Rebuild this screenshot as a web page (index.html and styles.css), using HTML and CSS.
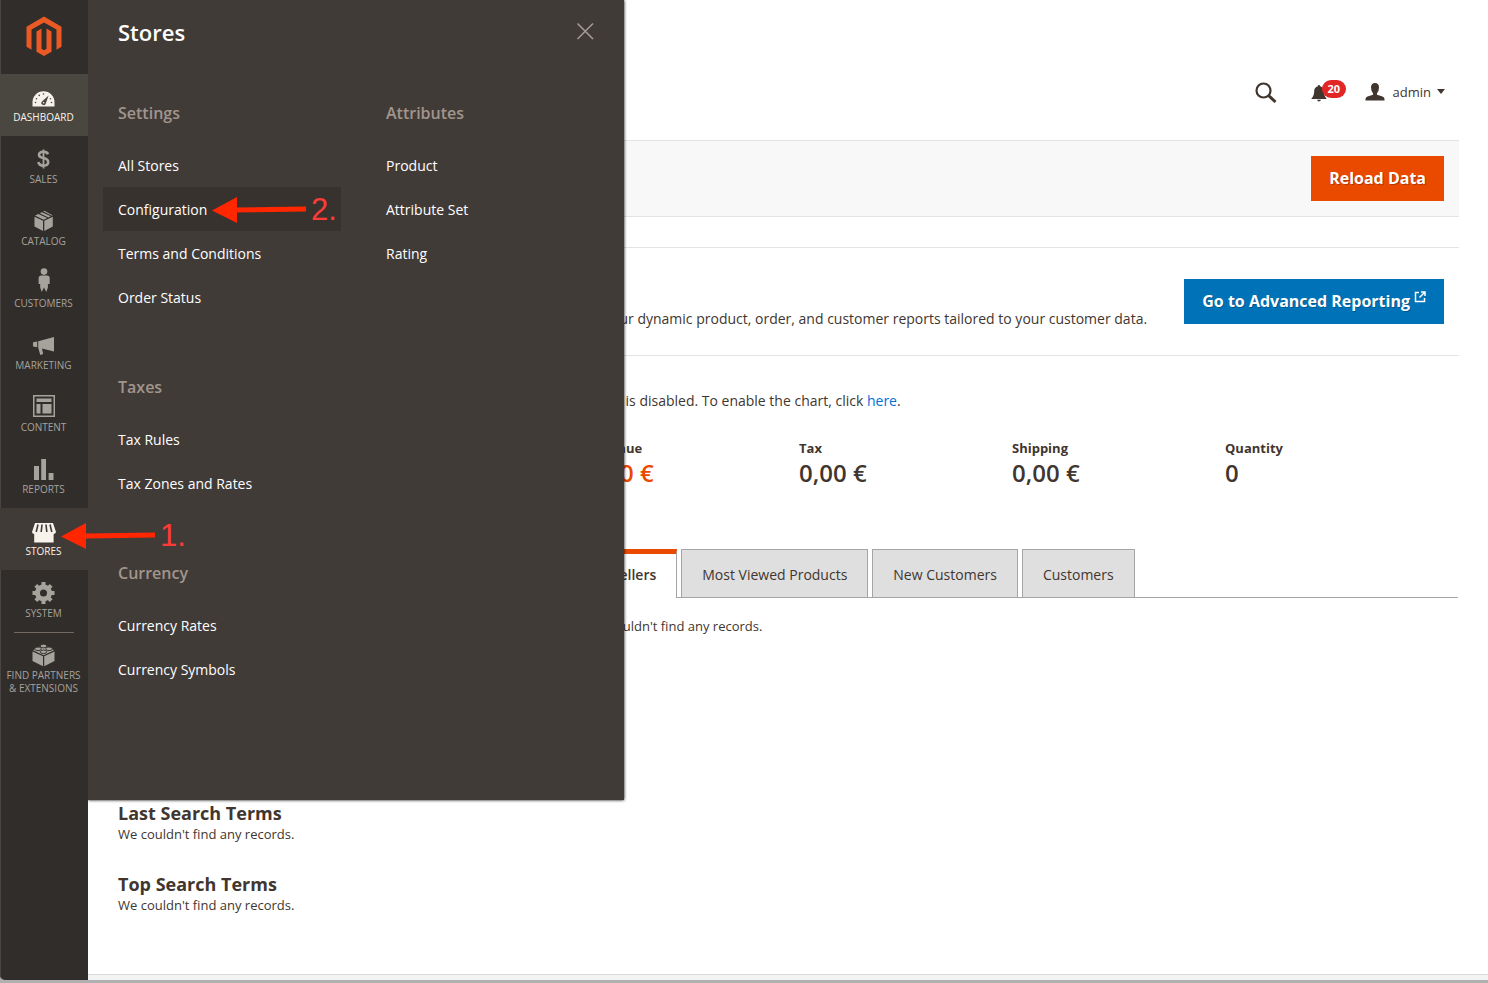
FILE: index.html
```html
<!DOCTYPE html>
<html lang="en">
<head>
    <meta charset="UTF-8">
    <meta name="viewport" content="width=device-width, initial-scale=1.0">
    <title>Dashboard / Magento Admin</title>
    <link rel="stylesheet" href="styles.css">
</head>
<body>
    <div class="window">
        <aside class="sidebar">
            <a class="logo" href="#" aria-label="Magento">
                <svg width="36" height="40" viewBox="0 0 36 40" fill="#eb5a24">
                    <path d="M18 0.5L35.5 10.7V30.8L30.5 33.7V13.6L18 6.4L5.5 13.6V33.7L0.5 30.8V10.7z"/>
                    <path d="M10.5 15.5L15.5 12.6V32.7L18 34.2L20.5 32.7V12.6L25.5 15.5V35.7L18 40L10.5 35.7z"/>
                </svg>
            </a>
            <nav class="menu">
                <a class="menu-item active" href="#">
                    <svg class="icon" viewBox="0 0 28 28">
                        <path d="M2.5 24.5V20a11 10.7 0 0 1 22 0v4.500z"/>
                        <g fill="#4a4640">
                            <circle cx="5.500" cy="20.500" r="0.800"/><circle cx="6.500" cy="16.800" r="0.800"/><circle cx="9.300" cy="13.400" r="0.800"/>
                            <circle cx="13.500" cy="12" r="0.800"/><circle cx="20.500" cy="16.800" r="0.800"/><circle cx="21.500" cy="20.500" r="0.800"/>
                            <path d="M18.600 13.500L15.800 21.500a2.200 2.200 0 1 1-3.800-2z"/>
                        </g>
                        <circle cx="13.700" cy="20.800" r="0.800"/>
                    </svg>
                    <span>Dashboard</span>
                </a>
                <a class="menu-item" href="#">
                    <svg class="icon" viewBox="0 0 28 28" fill="none" stroke="currentColor">
                        <path stroke-width="2.600" d="M18 10.200C17.400 8.600 15.900 7.800 13.500 7.800C10.600 7.800 9 9 9 11C9 15.400 18.200 12.700 18.200 18C18.200 20 16.400 21.600 13.500 21.600C10.500 21.600 8.700 20.200 8.400 18"/>
                        <path stroke-width="1.800" d="M13.500 5.500V24.500"/>
                    </svg>
                    <span>Sales</span>
                </a>
                <a class="menu-item" href="#">
                    <svg class="icon" viewBox="0 0 28 28">
                        <path d="M4.500 10.800L13 14.800V25L4.500 20.500zM14.300 14.800L22.800 10.800V20.500L14.300 25zM5 9.600L8.400 7.900L17.200 12L13.700 13.700zM9.700 7.300L12 6.200L20.700 10.300L18.500 11.400zM13.300 5.500L14.400 4.800L22.600 9.200L21.900 9.700z"/>
                    </svg>
                    <span>Catalog</span>
                </a>
                <a class="menu-item" href="#">
                    <svg class="icon" viewBox="0 0 28 28">
                        <circle cx="14" cy="3.600" r="3.300"/>
                        <path d="M11 7.500H17Q19.700 7.500 19.700 10V16H17.900V19.500L16.300 24L14 19.500L11.700 24L10.200 19.500V16H8.600V10Q8.600 7.500 11 7.500z"/>
                    </svg>
                    <span>Customers</span>
                </a>
                <a class="menu-item" href="#">
                    <svg class="icon" viewBox="0 0 28 28">
                        <path d="M8.200 11.200L24 7V21.500L12 18.600L13.200 24L10.300 25L8.200 17.800zM3 12.200L7.200 11.600V17.200L3 16.600z"/>
                    </svg>
                    <span>Marketing</span>
                </a>
                <a class="menu-item" href="#">
                    <svg class="icon" viewBox="0 0 28 28">
                        <path fill-rule="evenodd" d="M3 3H25V25H3zM4.500 4.500V23.500H23.500V4.500z"/>
                        <path d="M6.500 6.500H21.500V10H6.500zM6.500 12H10.500V21.500H6.500zM12.500 12H21.500V21.500H12.500z"/>
                    </svg>
                    <span>Content</span>
                </a>
                <a class="menu-item" href="#">
                    <svg class="icon" viewBox="0 0 28 28">
                        <path d="M4 12H9V26H4zM11.200 5H16V26H11.200zM18.600 19H23.500V26H18.600z"/>
                    </svg>
                    <span>Reports</span>
                </a>
                <a class="menu-item current" href="#">
                    <svg class="icon" viewBox="0 0 28 28">
                        <path d="M5 7H23L26 16Q25.500 18 23.600 18V26.500H4.200V18Q2.300 18 2 16z"/>
                        <path fill="none" stroke="#413b38" stroke-width="1.600" d="M8 8.500L6.200 16M12 8.500L11.200 16M16 8.500L16.800 16M20 8.500L21.800 16"/>
                    </svg>
                    <span>Stores</span>
                </a>
                <a class="menu-item" href="#">
                    <svg class="icon" viewBox="0 0 28 28">
                        <circle cx="13.500" cy="15" r="6" fill="none" stroke="currentColor" stroke-width="5"/>
                        <path fill="none" stroke="currentColor" stroke-width="4" d="M13.500 4V8M13.500 22V26M2.500 15H6.500M20.500 15H24.500M5.800 7.300L8.600 10.100M18.400 19.900L21.200 22.700M5.800 22.700L8.600 19.900M18.400 10.100L21.200 7.300"/>
                    </svg>
                    <span>System</span>
                </a>
                <a class="menu-item partners" href="#">
                    <svg class="icon" viewBox="0 0 28 28">
                        <path d="M2.500 11.500L13 16.300V26.300L2.500 21zM14.200 16.300L24.500 11.500V21L14.200 26.300zM13.500 4.500L24 10.300L13.600 15.300L3 10.300z"/>
                        <g fill="currentColor" stroke="#312d2a" stroke-width="0.900">
                            <ellipse cx="13.500" cy="6" rx="3.300" ry="1.800"/>
                            <ellipse cx="8" cy="8.800" rx="3.300" ry="1.800"/>
                            <ellipse cx="19" cy="8.800" rx="3.300" ry="1.800"/>
                            <ellipse cx="13.500" cy="11.800" rx="3.300" ry="1.800"/>
                        </g>
                    </svg>
                    <span>Find Partners<br>&amp; Extensions</span>
                </a>
            </nav>
        </aside>

        <section class="submenu">
            <header class="submenu-header">
                <h2>Stores</h2>
                <button class="close" type="button" aria-label="Close">
                    <svg width="18" height="18" viewBox="0 0 18 18" fill="none" stroke="#a79d95" stroke-width="1.500"><path d="M1.500 1.500L17 17M17 1.500L1.500 17"/></svg>
                </button>
            </header>
            <div class="submenu-columns">
                <div class="submenu-column">
                    <div class="submenu-group">
                        <h3>Settings</h3>
                        <a href="#">All Stores</a>
                        <a class="hover" href="#">Configuration</a>
                        <a href="#">Terms and Conditions</a>
                        <a href="#">Order Status</a>
                    </div>
                    <div class="submenu-group">
                        <h3>Taxes</h3>
                        <a href="#">Tax Rules</a>
                        <a href="#">Tax Zones and Rates</a>
                    </div>
                    <div class="submenu-group">
                        <h3>Currency</h3>
                        <a href="#">Currency Rates</a>
                        <a href="#">Currency Symbols</a>
                    </div>
                </div>
                <div class="submenu-column">
                    <div class="submenu-group">
                        <h3>Attributes</h3>
                        <a href="#">Product</a>
                        <a href="#">Attribute Set</a>
                        <a href="#">Rating</a>
                    </div>
                </div>
            </div>
        </section>

        <div class="page">
            <div class="page-content">
                <header class="page-header">
                    <button class="search" type="button" aria-label="Search">
                        <svg width="22" height="22" viewBox="0 0 22 22" fill="none" stroke="#41362f"><circle cx="8.500" cy="8.500" r="7" stroke-width="2.200"/><path stroke-width="3" d="M13.500 13.500L20.500 20"/></svg>
                    </button>
                    <button class="notifications" type="button" aria-label="Notifications">
                        <svg width="16" height="18" viewBox="0 0 16 18" fill="#41362f"><path d="M8 1Q9 1 9.200 2.200Q12.700 3.300 12.800 7Q12.800 12 15.500 14.500V15H0.500V14.500Q3.200 12 3.200 7Q3.300 3.300 6.800 2.200Q7 1 8 1zM6 15.800H10Q9.500 17.500 8 17.500Q6.500 17.500 6 15.800z"/></svg>
                        <span class="badge">20</span>
                    </button>
                    <button class="account" type="button">
                        <svg width="20" height="18" viewBox="0 0 20 18" fill="#41362f"><path d="M10 0Q14 0 14 4.500Q14 8 12 10.300V11.700L17.500 13.500Q19.500 14.200 19.500 16V17.500H0.500V16Q0.500 14.200 2.500 13.500L8 11.700V10.300Q6 8 6 4.500Q6 0 10 0z"/></svg>
                        <span>admin</span>
                        <svg width="8" height="5" viewBox="0 0 8 5" fill="#41362f"><path d="M0 0H8L4 5z"/></svg>
                    </button>
                </header>

                <div class="page-actions">
                    <button class="button primary" type="button">Reload Data</button>
                </div>

                <section class="reporting">
                    <p>Gain new insights and take command of your business' performance, using our dynamic product, order, and customer reports tailored to your customer data.</p>
                    <a class="button secondary" href="#">Go to Advanced Reporting
                        <svg width="12" height="12" viewBox="0 0 12 12" fill="none" stroke="#fff" stroke-width="1.500"><path d="M5 1.500H1.500V10.500H10.500V7M7 1H11V5M11 1L5.500 6.500"/></svg>
                    </a>
                </section>

                <main class="dashboard">
                    <p class="chart-note">Chart is disabled. To enable the chart, click <a href="#">here</a>.</p>
                    <dl class="totals">
                        <div class="total revenue"><dt>Revenue</dt><dd>0,00 €</dd></div>
                        <div class="total"><dt>Tax</dt><dd>0,00 €</dd></div>
                        <div class="total"><dt>Shipping</dt><dd>0,00 €</dd></div>
                        <div class="total"><dt>Quantity</dt><dd>0</dd></div>
                    </dl>
                    <div class="tabs" role="tablist">
                        <button class="tab selected" type="button" role="tab" aria-selected="true">Bestsellers</button>
                        <button class="tab" type="button" role="tab">Most Viewed Products</button>
                        <button class="tab" type="button" role="tab">New Customers</button>
                        <button class="tab" type="button" role="tab">Customers</button>
                    </div>
                    <p class="tab-content">We couldn't find any records.</p>
                </main>

                <section class="terms">
                    <h2>Last Search Terms</h2>
                    <p>We couldn't find any records.</p>
                </section>
                <section class="terms">
                    <h2>Top Search Terms</h2>
                    <p>We couldn't find any records.</p>
                </section>
            </div>
            <footer class="page-footer"></footer>
        </div>

        <div class="callout callout-stores">
            <svg width="94" height="26" viewBox="0 0 94 26" fill="#ff2600"><path d="M0 13.500L25 0V10.500L94 9.500V14.500L25 15.500V26z"/></svg>
            <span>1.</span>
        </div>
        <div class="callout callout-configuration">
            <svg width="94" height="26" viewBox="0 0 94 26" fill="#ff2600"><path d="M0 13.500L25 0V10.500L94 9.500V14.500L25 15.500V26z"/></svg>
            <span>2.</span>
        </div>
    </div>
</body>
</html>
```
FILE: styles.css
```css
* {
    box-sizing: border-box;
}
body {
    margin: 0;
    padding-bottom: 3px;
    background: #b0b0b0;
    color: #41362f;
    font-family: "Open Sans", Arial, sans-serif;
    font-size: 14px;
    line-height: 20px;
}
h2, h3, p, dl, dd {
    margin: 0;
}
a {
    color: #0070d9;
    text-decoration: none;
}
button {
    padding: 0;
    border: 0;
    background: none;
    color: inherit;
    font: inherit;
    cursor: pointer;
}
svg {
    display: block;
    flex: none;
}
.window {
    position: relative;
    display: flex;
    min-height: calc(100vh - 3px);
}

/* sidebar */
.sidebar {
    flex: none;
    width: 88px;
    background: #312d2a;
    box-shadow: inset 1px 0 #4a4542;
    border-bottom-left-radius: 5px;
}
.logo {
    display: flex;
    justify-content: center;
    height: 74px;
    padding-top: 16px;
}
.menu-item {
    display: flex;
    flex-direction: column;
    align-items: center;
    min-height: 62px;
    padding: 8px 1px 12px 0;
    color: #a6a29c;
    fill: currentColor;
    font-size: 10px;
    line-height: 13px;
    text-align: center;
    text-transform: uppercase;
    white-space: nowrap;
}
.menu-item .icon {
    width: 28px;
    height: 28px;
    margin-bottom: 1px;
}
.menu-item.active {
    background: #4a4640;
    color: #f7f3eb;
}
.menu-item.current {
    background: #413b38;
    color: #f7f3eb;
}
.partners {
    background: linear-gradient(#736963, #736963) center top / 60px 1px no-repeat;
}

/* submenu */
.submenu {
    position: absolute;
    top: 0;
    left: 88px;
    z-index: 2;
    width: 536px;
    height: 800px;
    padding: 0 30px;
    background: #413b38;
    box-shadow: 0 0 3px #000;
    clip-path: inset(0 -4px -4px 0);
    color: #fff;
}
.submenu-header {
    display: flex;
    justify-content: space-between;
    align-items: center;
    height: 66px;
    padding-bottom: 2px;
}
.submenu-header h2 {
    font-size: 22px;
    font-weight: 600;
    line-height: 30px;
}
.close {
    padding: 0 0 3px;
}
.submenu-columns {
    display: flex;
    gap: 30px;
    padding-top: 36px;
}
.submenu-column {
    flex: none;
    width: 238px;
}
.submenu-group {
    margin-bottom: 57px;
}
.submenu-group h3 {
    margin-bottom: 19px;
    color: #a1958c;
    font-size: 16px;
    font-weight: 600;
    line-height: 22px;
}
.submenu-group a {
    display: block;
    margin: 0 15px 0 -15px;
    padding: 13px 15px 11px;
    color: #fff;
    font-weight: 500;
}
.submenu-group a.hover {
    background: #38322e;
}

/* page */
.page {
    display: flex;
    flex: 1;
    flex-direction: column;
    min-width: 0;
    background: #fff;
}
.page-content {
    flex: 1;
    padding: 0 29px 0 30px;
}
.page-header {
    display: flex;
    justify-content: flex-end;
    align-items: center;
    height: 140px;
    padding: 46px 14px 0 0;
    font-size: 13px;
}
.notifications {
    position: relative;
    margin: 0 38px 0 34px;
}
.badge {
    position: absolute;
    top: -4px;
    left: 11px;
    padding: 0 6px;
    border-radius: 9px;
    background: #e22626;
    color: #fff;
    font-size: 11px;
    font-weight: 700;
    line-height: 18px;
}
.account {
    display: flex;
    align-items: center;
    padding-bottom: 3px;
}
.account span {
    margin: 0 6px 0 8px;
}
.page-actions {
    display: flex;
    justify-content: flex-end;
    padding: 15px;
    background: #f8f8f8;
    border: solid #e3e3e3;
    border-width: 1px 0;
}
.button {
    display: flex;
    align-items: center;
    gap: 4px;
    height: 45px;
    padding: 0 18px 2px;
    color: #fff;
    font-size: 16px;
    font-weight: 700;
    text-shadow: 1px 1px 0 rgba(0, 0, 0, 0.25);
    white-space: nowrap;
}
.primary {
    background: #ea4900;
}
.secondary {
    background: #0073b8;
}
.secondary svg {
    margin-bottom: 8px;
}
.reporting {
    display: flex;
    justify-content: space-between;
    margin-top: 30px;
    padding: 31px 15px 31px 0;
    border: solid #e3e3e3;
    border-width: 1px 0;
}
.reporting p {
    padding-top: 30px;
    margin-bottom: -10px;
    white-space: nowrap;
}

/* dashboard */
.dashboard {
    width: 902px;
    margin: 0 1px 0 auto;
    padding-top: 35px;
}
.chart-note,
.totals,
.tab-content {
    padding-left: 30px;
}
.totals {
    display: grid;
    grid-template-columns: repeat(4, 1fr);
    margin: 28px 20px 60px 0;
}
.total dt {
    font-size: 13px;
    font-weight: 700;
    line-height: 18px;
}
.total dd {
    font-size: 24px;
    font-weight: 600;
    line-height: 32px;
}
.revenue dd {
    color: #ea4900;
}
.tabs {
    display: flex;
    gap: 4px;
    padding-left: 6px;
    border-bottom: 1px solid #a5a5a5;
}
.tab {
    height: 48px;
    padding: 2px 20px 0;
    background: #dfdfdf;
    border: 1px solid #a5a5a5;
    border-bottom: 0;
}
.tab.selected {
    margin-bottom: -1px;
    height: 49px;
    padding-top: 0;
    padding-bottom: 2px;
    background: #fff;
    border-top: 5px solid #ea4900;
    font-weight: 600;
}
.tab-content {
    margin: 18px 0 166px;
    font-size: 13px;
}
.terms {
    margin-bottom: 29px;
    font-size: 13px;
}
.terms h2 {
    font-size: 18px;
    font-weight: 700;
    line-height: 22px;
}
.page-footer {
    height: 6px;
    background: #f3f3f3;
    border-top: 1px solid #d9d9d9;
}

/* numbered steps */
.callout {
    position: absolute;
    z-index: 3;
    display: flex;
    align-items: center;
    gap: 5px;
    color: #ff3b38;
    font-family: "Liberation Sans", Arial, sans-serif;
    font-size: 31px;
    line-height: 26px;
}
.callout-stores {
    top: 523px;
    left: 61px;
}
.callout-configuration {
    top: 197px;
    left: 212px;
}
```
